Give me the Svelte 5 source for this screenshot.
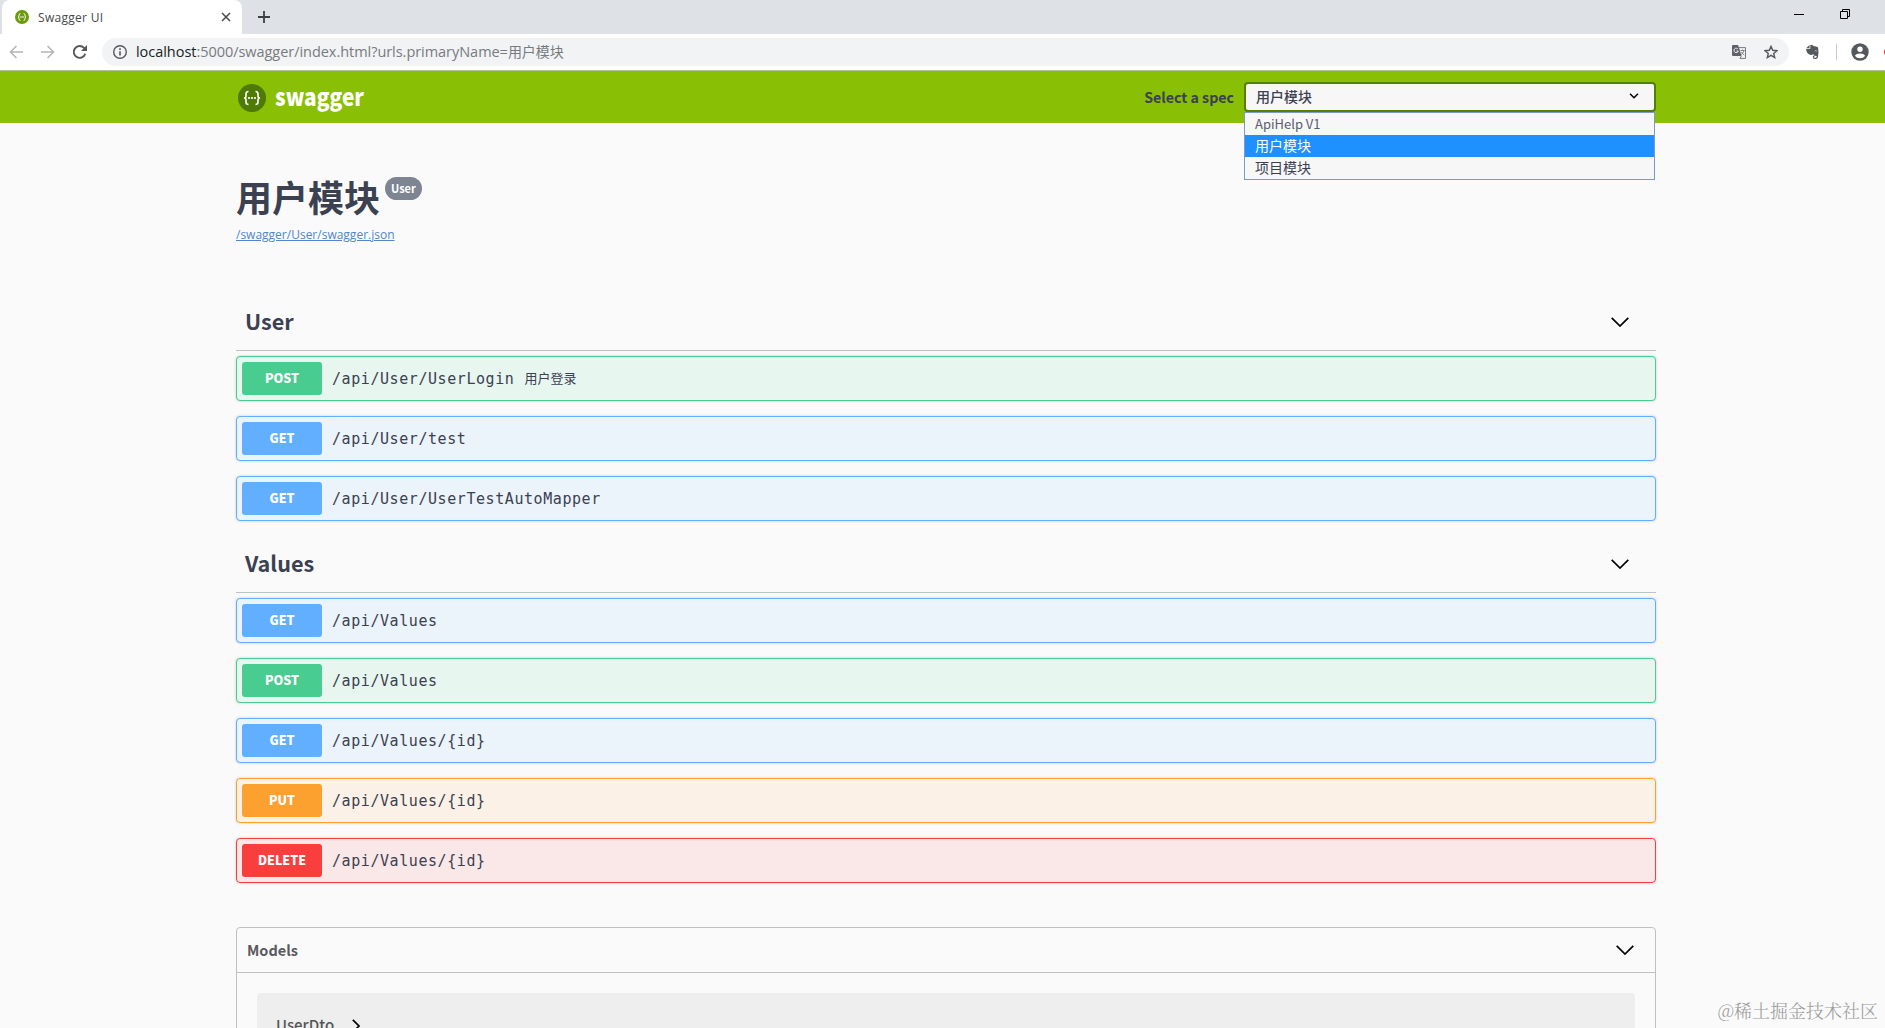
<script>
  let selected = '用户模块';
  const specs = ['ApiHelp V1', '用户模块', '项目模块'];

  const sections = [
    {
      name: 'User',
      ops: [
        { method: 'post', path: '/api/User/UserLogin', summary: '用户登录' },
        { method: 'get', path: '/api/User/test' },
        { method: 'get', path: '/api/User/UserTestAutoMapper' },
      ],
    },
    {
      name: 'Values',
      ops: [
        { method: 'get', path: '/api/Values' },
        { method: 'post', path: '/api/Values' },
        { method: 'get', path: '/api/Values/{id}' },
        { method: 'put', path: '/api/Values/{id}' },
        { method: 'delete', path: '/api/Values/{id}' },
      ],
    },
  ];
</script>

<div class="window">
  <div class="tabs">
    <div class="tab">
      <svg class="favicon" width="14" height="14" viewBox="0 0 28 28">
        <circle cx="14" cy="14" r="14" fill="#6a9a0a" />
        <path d="M11 7q-3 0-3 3v2q0 2-2 2 2 0 2 2v2q0 3 3 3M17 7q3 0 3 3v2q0 2 2 2-2 0-2 2v2q0 3-3 3M10 14h8" fill="none" stroke="#fff" stroke-width="1.8" />
      </svg>
      <span class="tab-title">Swagger UI</span>
      <svg width="10" height="10" viewBox="0 0 10 10">
        <path d="M1 1l8 8M9 1l-8 8" stroke="#45494d" stroke-width="1.5" />
      </svg>
    </div>
    <svg class="plus" width="12" height="12" viewBox="0 0 12 12">
      <path d="M6 0v12M0 6h12" stroke="#3c4043" stroke-width="1.8" />
    </svg>
    <svg class="minimise" width="10" height="10" viewBox="0 0 10 10">
      <path d="M0 5.5h10" stroke="#000" />
    </svg>
    <svg class="restore" width="10" height="10" viewBox="0 0 10 10">
      <path d="M.5 2.5h7v7h-7zM2.5 2.5v-2h7v7h-2" fill="none" stroke="#000" />
    </svg>
  </div>

  <div class="toolbar">
    <svg class="nav" width="14" height="14" viewBox="0 0 14 14">
      <path d="M14 7H1.5M7.5 1l-6 6 6 6" fill="none" stroke="#b4b6b9" stroke-width="1.6" />
    </svg>
    <svg class="nav" width="14" height="14" viewBox="0 0 14 14">
      <path d="M0 7h12.5M6.5 1l6 6-6 6" fill="none" stroke="#b4b6b9" stroke-width="1.6" />
    </svg>
    <svg class="reload" width="14" height="14" viewBox="0 0 14 14">
      <path d="M12.3 8.8A5.9 5.9 0 1 1 11 2.9L12.2 4.2" fill="none" stroke="#55595d" stroke-width="1.9" />
      <path d="M14 0v6H8z" fill="#55595d" />
    </svg>
    <div class="omnibox">
      <svg class="info" width="14" height="14" viewBox="0 0 14 14">
        <circle cx="7" cy="7" r="6.3" fill="none" stroke="#55595d" stroke-width="1.4" />
        <path d="M7 6.2v4.3M7 3.3v1.6" stroke="#55595d" stroke-width="1.6" />
      </svg>
      <span class="url"><b>localhost</b>:5000/swagger/index.html?urls.primaryName=<i>用户模块</i></span>
      <svg class="translate" width="14" height="14" viewBox="0 0 14 14">
        <path d="M0 1q0-1 1-1h5l1 2.5L9.5 11H1q-1 0-1-1z" fill="#5f6368" />
        <path d="M6.500 2.600h7v10.800H8L9.400 11" fill="none" stroke="#777b80" />
        <path d="M6 4.200A2.200 2.200 0 1 0 6.300 6H4.500" fill="none" stroke="#f1f3f4" />
        <path d="M8.500 5.500h4.200M10.500 4.500v1M12 5.700q-.8 2.500-3 4M9.300 7q1.500 2 3 3" fill="none" stroke="#777b80" stroke-width=".9" />
      </svg>
      <svg class="star" width="14" height="14" viewBox="0 0 14 14">
        <path d="M7 1.400l1.700 3.900 4.200.4-3.200 2.800 1 4.100L7 10.400l-3.700 2.200 1-4.100L1.100 5.700l4.200-.4z" fill="none" stroke="#55595d" stroke-width="1.4" />
      </svg>
    </div>
    <svg class="evernote" width="13" height="14" viewBox="0 0 13 14">
      <path d="M3.500 0v3H.4zM4.300 0h2.200l1 1.100 3.500.6q1 .3 1.200 1.600.6 4.500-.2 8.800-.4 1.900-2.200 1.900H8.600q-1.800 0-1.800-1.900 0-1.800 1.900-1.800v1.300q-.8 0-.8.600 0 .6.800.6h1q1 0 1-1.800-.6 0-1.600-.2-1.600-.4-1.900-1.700-.7 1.100-2.600.9Q1.400 9.300.8 7.100.2 5.400.1 3.800h4.200z" fill="#55595d" />
      <path d="M9 6.300q.2-1.200 1.700-.3" stroke="#fff" fill="none" stroke-width=".7" />
    </svg>
    <span class="divider"></span>
    <svg class="profile" width="18" height="18" viewBox="0 0 18 18">
      <circle cx="9" cy="9" r="8.700" fill="#55595d" />
      <circle cx="9" cy="6.300" r="2.700" fill="#fff" />
      <path d="M3.800 12.800q1.500-2.400 5.200-2.400t5.200 2.400Q12.300 15.300 9 15.300t-5.200-2.500z" fill="#fff" />
    </svg>
    <span class="update"></span>
  </div>

  <header class="topbar">
    <svg class="logo" width="130" height="52" viewBox="0 0 130 52">
      <circle cx="14" cy="27" r="14" fill="#4f7a05" />
      <path d="M10.500 20.500q-2.500 0-2.500 2.500v2q0 2-2 2 2 0 2 2v2q0 2.500 2.500 2.500M17.500 20.500q2.500 0 2.500 2.500v2q0 2 2 2-2 0-2 2v2q0 2.500-2.500 2.500" fill="none" stroke="#fff" stroke-width="1.6" />
      <g fill="#fff">
        <circle cx="11" cy="27" r="1.1" />
        <circle cx="14" cy="27" r="1.1" />
        <circle cx="17" cy="27" r="1.1" />
      </g>
      <text x="37" y="35" textLength="89" lengthAdjust="spacingAndGlyphs">swagger</text>
    </svg>
    <span class="select-label">Select a spec</span>
    <div class="select">
      <div class="select-box">
        <span>{selected}</span>
        <svg width="10" height="6" viewBox="0 0 10 6">
          <path d="M1 .8l4 4 4-4" fill="none" stroke="#000" stroke-width="1.5" />
        </svg>
      </div>
      <ul class="options">
        {#each specs as spec}
          <li class:active={spec === selected}>{spec}</li>
        {/each}
      </ul>
    </div>
  </header>

  <main>
    <div class="info-block">
      <h2>用户模块<small>User</small></h2>
      <a href="#json">/swagger/User/swagger.json</a>
    </div>

    {#each sections as section}
      <section>
        <h4>
          <span>{section.name}</span>
          <svg width="18" height="10" viewBox="0 0 18 10">
            <path d="M.7.8L9 9 17.3.8" fill="none" stroke="#000" stroke-width="1.7" />
          </svg>
        </h4>
        {#each section.ops as op}
          <div class="opblock {op.method}">
            <span class="method">{op.method.toUpperCase()}</span>
            <span class="path">{op.path}</span>
            {#if op.summary}<span class="summary">{op.summary}</span>{/if}
          </div>
        {/each}
      </section>
    {/each}

    <div class="models">
      <div class="models-head">
        <span>Models</span>
        <svg width="18" height="10" viewBox="0 0 18 10">
          <path d="M.7.8L9 9 17.3.8" fill="none" stroke="#000" stroke-width="1.7" />
        </svg>
      </div>
      <div class="model">
        <span>UserDto</span>
        <svg width="8" height="14" viewBox="0 0 8 14">
          <path d="M.8.8L7 7 .8 13.2" fill="none" stroke="#000" stroke-width="1.7" />
        </svg>
      </div>
    </div>
  </main>

  <div class="watermark">@稀土掘金技术社区</div>
</div>

<style>
  :global(body) {
    overflow: hidden;
    background: #fafafa;
  }
  .window {
    position: relative;
    height: 1028px;
    overflow: hidden;
    color: #3b4151;
    font-family: "Noto Sans CJK SC", "Open Sans", sans-serif;
  }
  svg {
    display: block;
    flex: none;
  }
  .tabs {
    display: flex;
    height: 34px;
    background: #dee1e6;
  }
  .tab {
    box-sizing: border-box;
    display: flex;
    align-items: center;
    width: 240px;
    margin-left: 2px;
    padding: 0 11px 0 13px;
    border-radius: 8px 8px 0 0;
    background: #fff;
  }
  .tab-title {
    flex: 1;
    margin-left: 9px;
    color: #45494d;
    font: 12px "Open Sans", sans-serif;
    letter-spacing: 0.3px;
  }
  .plus {
    margin: 11px 0 0 16px;
  }
  .minimise {
    margin: 9px 36px 0 auto;
  }
  .restore {
    margin: 9px 35px 0 0;
  }
  .toolbar {
    box-sizing: border-box;
    display: flex;
    align-items: center;
    height: 37px;
    padding-left: 9px;
    border-bottom: 1px solid #b5bd9c;
    background: #fff;
  }
  .nav {
    margin-right: 18px;
  }
  .reload {
    margin-right: 15px;
  }
  .omnibox {
    box-sizing: border-box;
    display: flex;
    flex: none;
    align-items: center;
    width: 1687px;
    height: 28px;
    padding: 0 11px;
    border-radius: 14px;
    background: #f1f3f4;
  }
  .url {
    flex: 1;
    margin: -2px 0 0 9px;
    color: #777b80;
    font: 14.5px "Open Sans", "Noto Sans CJK SC", sans-serif;
    letter-spacing: -0.04px;
    white-space: nowrap;
  }
  .url b {
    color: #202124;
    font-weight: 400;
  }
  .url i {
    font-size: 14px;
    font-style: normal;
    letter-spacing: 0;
  }
  .translate {
    margin-right: 18px;
  }
  .evernote {
    margin-left: 17px;
  }
  .divider {
    flex: none;
    width: 1px;
    height: 16px;
    margin: 0 14px 0 17px;
    background: #c8cacd;
  }
  .update {
    flex: none;
    width: 8px;
    height: 8px;
    margin-left: 15px;
    border-radius: 50%;
    background: #e3342f;
  }
  .topbar {
    display: flex;
    height: 52px;
    padding: 0 229px 0 238px;
    background: #89bf04;
  }
  .logo {
    margin-right: auto;
  }
  .logo text {
    fill: #fff;
    font: 900 24px "Noto Sans CJK SC", sans-serif;
  }
  .select-label {
    margin-right: 10px;
    font-size: 14.2px;
    font-weight: 700;
    line-height: 52px;
  }
  .select {
    position: relative;
    width: 412px;
    margin-top: 11px;
  }
  .select-box {
    box-sizing: border-box;
    display: flex;
    align-items: center;
    justify-content: space-between;
    height: 30px;
    padding: 0 15px 2px 10px;
    border: 2px solid #547f00;
    border-radius: 4px;
    background: #f7f7f7;
    font-size: 14px;
    font-weight: 500;
  }
  .options {
    position: absolute;
    z-index: 1;
    top: 30px;
    left: 0;
    box-sizing: border-box;
    width: 411px;
    margin: 0;
    padding: 0;
    border: 1px solid #7a9bc8;
    background: #f7f7f7;
    list-style: none;
  }
  .options li {
    height: 22px;
    padding-left: 10px;
    font-size: 14px;
    line-height: 20px;
  }
  .options li:first-child {
    color: #5c5c6c;
    font-size: 13px;
    line-height: 22px;
  }
  .options .active {
    background: #1e90ff;
    color: #fff;
  }
  main {
    width: 1420px;
    margin: 0 auto 0 236px;
  }
  .info-block {
    box-sizing: border-box;
    height: 171px;
    padding-top: 47px;
  }
  h2 {
    display: flex;
    margin: 0;
    font-size: 36px;
    line-height: 52px;
  }
  h2 small {
    height: 23px;
    margin: 7px 0 0 5px;
    padding: 0 6px;
    border-radius: 12px;
    background: #7d8492;
    color: #fff;
    font-size: 11px;
    line-height: 22px;
  }
  a {
    display: block;
    margin-top: 4px;
    color: #4f86cf;
    font: 12px/18px "Open Sans", sans-serif;
  }
  h4 {
    box-sizing: border-box;
    display: flex;
    align-items: center;
    justify-content: space-between;
    height: 57px;
    margin: 0 0 5px;
    padding: 0 27px 0 9px;
    border-bottom: 1px solid #bfc0c4;
    font-size: 21.6px;
  }
  h4 span {
    margin-top: -3px;
  }
  section:first-of-type {
    margin-bottom: 15px;
  }
  .opblock {
    box-sizing: border-box;
    display: flex;
    align-items: center;
    height: 45px;
    margin-bottom: 15px;
    padding: 5px;
    border: 1px solid var(--line);
    border-radius: 4px;
    background: var(--fill);
    box-shadow: 0 0 3px rgba(0, 0, 0, 0.19);
  }
  .post {
    --line: #49cc90;
    --fill: #e8f6f0;
  }
  .get {
    --line: #61affe;
    --fill: #ebf3fb;
  }
  .put {
    --line: #fca130;
    --fill: #fbf1e6;
  }
  .delete {
    --line: #f93e3e;
    --fill: #fae7e7;
  }
  .method {
    width: 80px;
    height: 33px;
    border-radius: 3px;
    background: var(--line);
    color: #fff;
    font-size: 12.5px;
    font-weight: 900;
    line-height: 32px;
    text-align: center;
  }
  .path {
    margin: 2px 0 0 10px;
    font-family: "DejaVu Sans Mono", monospace;
    font-size: 15px;
    letter-spacing: 0.57px;
    line-height: 33px;
  }
  .summary {
    margin: -2px 0 0 10px;
    font-size: 13px;
  }
  .models {
    margin-top: 44px;
    border: 1px solid #bfc0c2;
    border-radius: 4px;
  }
  .models-head {
    display: flex;
    align-items: center;
    justify-content: space-between;
    height: 44px;
    padding: 0 21px 0 10px;
    border-bottom: 1px solid #bfc0c2;
    color: #5a5a5e;
    font-size: 14.5px;
    font-weight: 700;
  }
  .models-head span {
    margin-top: -2px;
  }
  .model {
    display: flex;
    align-items: center;
    gap: 18px;
    height: 66px;
    margin: 20px 20px 30px;
    padding-left: 19px;
    border-radius: 4px;
    background: #eee;
    color: #555;
    font-size: 15px;
    font-weight: 500;
  }
  .model span {
    margin-top: -3px;
  }
  .watermark {
    position: absolute;
    right: 7px;
    bottom: 5px;
    color: #999;
    font-family: "Noto Serif CJK SC", "Noto Sans CJK SC", serif;
    font-size: 18px;
    font-weight: 300;
    line-height: 26px;
  }
</style>
